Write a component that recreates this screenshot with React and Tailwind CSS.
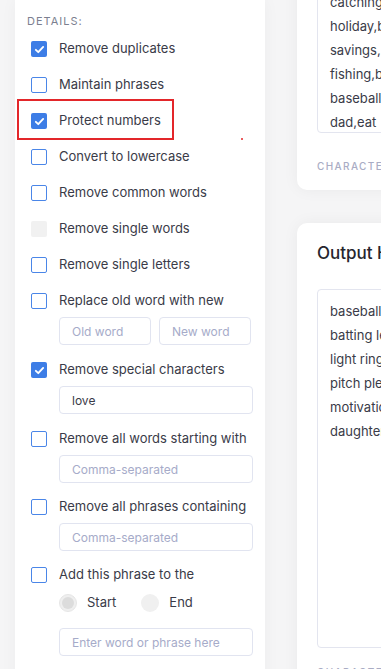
import React from "react";

function Box({ state }) {
  if (state === "disabled")
    return <span className="w-4 h-4 rounded-[2px] bg-[#f1f1f1] shrink-0" />;
  if (state === "checked")
    return (
      <span className="w-4 h-4 rounded-[2px] bg-[#3d7de6] flex items-center justify-center shrink-0">
        <svg viewBox="0 0 16 16" className="w-[13px] h-[13px]">
          <path d="M3.5 8.4l3 2.9 6-6.4" stroke="white" strokeWidth="2.3" fill="none" strokeLinecap="round" strokeLinejoin="round" />
        </svg>
      </span>
    );
  return <span className="w-4 h-4 rounded-[2px] border-[1.5px] border-[#4a86e8] bg-white shrink-0" />;
}

function Row({ state, label, className = "" }) {
  return (
    <div className={"h-9 flex items-center gap-3 pl-4 " + className}>
      <Box state={state} />
      <span className="whitespace-nowrap">{label}</span>
    </div>
  );
}

function Field({ placeholder, value, className = "" }) {
  return (
    <input
      readOnly
      defaultValue={value}
      placeholder={placeholder}
      className={
        "h-[28px] rounded-[4px] border border-[#e1e4f0] bg-white px-[12px] text-[12px] text-[#3a3b48] placeholder:text-[#a6abc9] outline-none " +
        className
      }
    />
  );
}

export default function App() {
  const outLines = [
    "baseball glove",
    "batting lessons",
    "light ring",
    "pitch please",
    "motivation",
    "daughter",
  ];
  return (
    <div className="w-[381px] h-[669px] overflow-hidden bg-[#f5f5f6] flex items-start gap-8 pl-[15px] font-['Inter','Noto_Sans',sans-serif] text-[#3a3b48]">
      <div className="relative w-[250px] shrink-0 h-[700px] bg-white shadow-[0_0_16px_rgba(0,0,0,0.04)] pt-[13px] text-[13px]">
        <div className="pl-3 h-4 leading-4 text-[11px] tracking-[1px] text-[#7c7f8f] mb-[2px]">DETAILS:</div>
        <Row state="checked" label="Remove duplicates" />
        <Row label="Maintain phrases" />
        <Row state="checked" label="Protect numbers" />
        <Row label="Convert to lowercase" />
        <Row label="Remove common words" />
        <Row state="disabled" label="Remove single words" />
        <Row label="Remove single letters" />
        <Row label="Replace old word with new" />
        <div className="ml-[44px] flex gap-2 mt-[-2px] mb-[7px]">
          <Field placeholder="Old word" className="w-[92px]" />
          <Field placeholder="New word" className="w-[92px]" />
        </div>
        <Row state="checked" label="Remove special characters" />
        <div className="ml-[44px] mt-[-2px] mb-[7px]">
          <Field value="love" className="w-[194px]" />
        </div>
        <Row label="Remove all words starting with" />
        <div className="ml-[44px] mt-[-2px] mb-[6px]">
          <Field placeholder="Comma-separated" className="w-[194px]" />
        </div>
        <Row label="Remove all phrases containing" />
        <div className="ml-[44px] mt-[-2px] mb-[6px]">
          <Field placeholder="Comma-separated" className="w-[194px]" />
        </div>
        <Row label="Add this phrase to the" />
        <div className="ml-[44px] mt-[2px] h-4 flex items-center">
          <span className="w-[18px] h-[18px] rounded-full bg-[#efefef] border border-[#e6e6e6] flex items-center justify-center shrink-0">
            <span className="w-[12px] h-[12px] rounded-full bg-[#dcdcdc]" />
          </span>
          <span className="ml-[10px]">Start</span>
          <span className="ml-[25px] w-[18px] h-[18px] rounded-full bg-[#f0f0f0] shrink-0" />
          <span className="ml-[10px]">End</span>
        </div>
        <div className="ml-[44px] mt-[17px]">
          <Field placeholder="Enter word or phrase here" className="w-[194px]" />
        </div>
        <div className="absolute left-[2px] top-[99px] w-[157px] h-[41px] border-2 border-[#e3262a] pointer-events-none" />
        <div className="absolute left-[226px] top-[138px] w-[2px] h-[2px] rounded-full bg-[#e3262a]" />
      </div>

      <div className="w-[320px] shrink-0 flex flex-col mt-[-90px]">
        <div className="shrink-0 h-[280px] flex flex-col bg-white rounded-[10px] shadow-[0_0_16px_rgba(0,0,0,0.05)] px-5 pt-[22px]">
          <div className="shrink-0 h-[201px] border border-[#e3e5ef] rounded-[4px] overflow-hidden px-3 pt-[9px] text-[13px] leading-[24px]">
            <div className="whitespace-nowrap">lake,boat,fishing rod</div>
            <div className="whitespace-nowrap">summer,camping trip</div>
            <div className="whitespace-nowrap">catching fish,lake</div>
            <div className="whitespace-nowrap">holiday,beach</div>
            <div className="whitespace-nowrap">
              savings,<span className="text-[#f0a060]">budget</span>
            </div>
            <div className="whitespace-nowrap">fishing,boat</div>
            <div className="whitespace-nowrap">baseball,bat</div>
            <div className="whitespace-nowrap">dad,eat</div>
          </div>
          <div className="shrink-0 h-[26px]" />
          <div className="shrink-0 text-[10px] leading-[14px] tracking-[1.4px] font-medium text-[#a9acc4] whitespace-nowrap">
            CHARACTERS: 0
          </div>
        </div>

        <div className="shrink-0 h-[33px]" />

        <div className="shrink-0 flex flex-col bg-white rounded-[10px] shadow-[0_0_16px_rgba(0,0,0,0.05)] px-5 pt-[18px] pb-5">
          <div className="shrink-0 h-[24px] text-[17px] leading-[24px] font-medium text-[#26262e] whitespace-nowrap">Output Hashtags</div>
          <div className="shrink-0 h-[24px]" />
          <div className="shrink-0 h-[359px] border border-[#e3e5ef] rounded-[4px] overflow-hidden px-3 pt-[9px] text-[13px] leading-[24px]">
            {outLines.map((l) => (
              <div key={l} className="whitespace-nowrap">{l}</div>
            ))}
          </div>
          <div className="shrink-0 h-[17px]" />
          <div className="shrink-0 text-[10px] leading-[14px] tracking-[1.4px] font-medium text-[#a9acc4] whitespace-nowrap">
            CHARACTERS: 0
          </div>
        </div>
      </div>
    </div>
  );
}
